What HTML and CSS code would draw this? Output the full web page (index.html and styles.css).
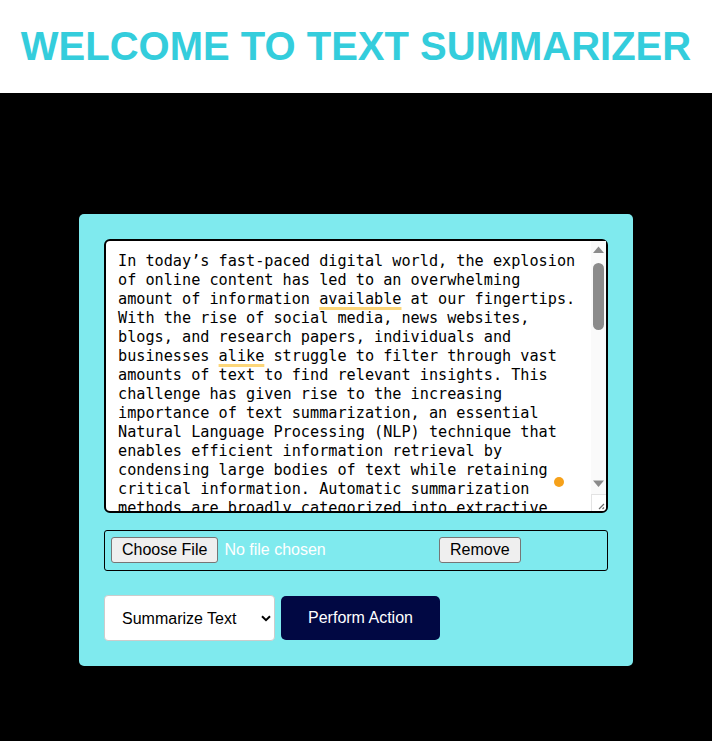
FILE: index.html
```html
<!DOCTYPE html>
<html lang="en">
<head>
<meta charset="utf-8">
<title>Text Summarizer</title>
<link rel="stylesheet" href="styles.css">
</head>
<body>
<header class="header">
  <h1 class="title">WELCOME TO TEXT SUMMARIZER</h1>
</header>
<main class="main">
  <section class="card">
    <div class="editor-wrap">
      <div class="editor" contenteditable="true" spellcheck="false">In today’s fast-paced digital world, the explosion of online content has led to an overwhelming amount of information <span class="mark">available</span> at our fingertips. With the rise of social media, news websites, blogs, and research papers, individuals and businesses <span class="mark">alike</span> struggle to filter through vast amounts of text to find relevant insights. This challenge has given rise to the increasing importance of text summarization, an essential Natural Language Processing (NLP) technique that enables efficient information retrieval by condensing large bodies of text while retaining critical information. Automatic summarization methods are broadly categorized into extractive and abstractive approaches. Extractive summarization identifies the most important sentences in a document and stitches them together to form a shorter version of the original text, while abstractive summarization generates entirely new sentences that capture the core meaning, much like a human would when writing a summary. Extractive methods often rely on statistical features such as word frequency, sentence position and similarity scores, whereas abstractive methods use deep learning models such as sequence-to-sequence networks and transformers. Recent advances in large pre-trained language models have greatly improved the fluency and coherence of generated summaries, making text summarization a practical tool for news aggregation, legal document review, medical record analysis and academic research.</div>
      <div class="scrollbar" aria-hidden="true">
        <svg class="arrow" width="15" height="17" viewBox="0 0 15 17"><path d="M2 12 L7.5 5.5 L13 12 Z" fill="#8b8b8b"/></svg>
        <div class="track"><div class="thumb"></div></div>
        <svg class="arrow" width="15" height="17" viewBox="0 0 15 17"><path d="M2 3.5 L7.5 10 L13 3.5 Z" fill="#8b8b8b"/></svg>
      </div>
      <div class="resizer" aria-hidden="true">
        <svg width="15" height="15" viewBox="0 0 15 15"><path d="M13 8 L8 13 M13 11.5 L11.5 13" stroke="#6b6b6b" stroke-width="1.2" fill="none"/></svg>
      </div>
      <span class="dot"></span>
    </div>
    <div class="file-row">
      <div class="file-group">
        <button class="btn-gray" type="button">Choose File</button>
        <span class="file-name">No file chosen</span>
      </div>
      <button class="btn-gray" type="button">Remove</button>
    </div>
    <div class="action-row">
      <div class="select-wrap">
        <select class="select">
          <option>Summarize Text</option>
          <option>Paraphrase Text</option>
        </select>
        <svg class="chevron" width="10" height="7" viewBox="0 0 10 7"><path d="M1 1.2 L5 5.2 L9 1.2" fill="none" stroke="#000" stroke-width="2"/></svg>
      </div>
      <button class="btn-primary" type="button">Perform Action</button>
    </div>
  </section>
</main>
</body>
</html>
```
FILE: styles.css
```css
html, body {
  margin: 0;
  padding: 0;
}
body {
  background: #000;
  min-height: 100vh;
  font-family: "Liberation Sans", Arial, sans-serif;
}
.header {
  background: #fff;
  padding: 23px 0 24px;
}
.title {
  margin: 0;
  text-align: center;
  font-size: 40px;
  line-height: 46px;
  font-weight: bold;
  color: #34cddc;
}
.main {
  padding-top: 121px;
  display: flex;
  justify-content: center;
}
.card {
  width: 554px;
  box-sizing: border-box;
  padding: 25px;
  background: #7feaee;
  border-radius: 5px;
}
.editor-wrap {
  position: relative;
}
.editor {
  box-sizing: border-box;
  width: 100%;
  height: 274px;
  border: 2px solid #000;
  border-radius: 6px;
  background: #fff;
  padding: 11px 27px 12px 12px;
  font-family: "DejaVu Sans Mono", monospace;
  font-size: 15.2px;
  line-height: 19px;
  color: #000;
  white-space: pre-wrap;
  overflow: hidden;
  outline: none;
}
.mark {
  text-decoration: underline;
  text-decoration-color: #fcd679;
  text-decoration-thickness: 2.5px;
  text-underline-offset: 3px;
}
.scrollbar {
  position: absolute;
  top: 2px;
  right: 2px;
  width: 15px;
  height: 253px;
  background: #fafafa;
  display: flex;
  flex-direction: column;
}
.arrow {
  display: block;
  flex: none;
}
.track {
  flex: 1;
  padding: 5px 2px 0;
}
.thumb {
  height: 67px;
  background: #8b8b8b;
  border-radius: 6px;
}
.resizer {
  position: absolute;
  right: 2px;
  bottom: 2px;
  width: 15px;
  height: 17px;
  box-sizing: border-box;
  border-top: 1px solid #e3e3e3;
  border-left: 1px solid #e3e3e3;
  border-bottom-right-radius: 4px;
  background: #fff;
  overflow: hidden;
  display: flex;
  align-items: flex-end;
}
.resizer svg {
  display: block;
  margin: 0 0 0 -1px;
}
.dot {
  position: absolute;
  left: 450px;
  top: 238px;
  width: 10px;
  height: 10px;
  border-radius: 50%;
  background: #f6a11a;
}
.file-row {
  margin-top: 17px;
  display: flex;
  align-items: center;
  border: 1px solid #000;
  border-radius: 3px;
  padding: 6px 6px 7px;
}
.file-group {
  width: 328px;
  display: flex;
  align-items: center;
  gap: 6px;
}
.btn-gray {
  font-family: "Liberation Sans", Arial, sans-serif;
  font-size: 16px;
  line-height: 18px;
  height: 26px;
  padding: 0 10px;
  background: #efefef;
  color: #000;
  border: 1px solid #767676;
  border-radius: 3px;
  box-sizing: border-box;
}
.file-name {
  color: #fff;
  font-size: 16px;
}
.action-row {
  margin-top: 24px;
  display: flex;
  align-items: center;
  gap: 6px;
}
.select-wrap {
  position: relative;
}
.select {
  appearance: none;
  -webkit-appearance: none;
  width: 171px;
  height: 46px;
  box-sizing: border-box;
  background: #fff;
  border: 1px solid #cccccc;
  border-radius: 4px;
  padding: 0 0 0 17px;
  font-family: "Liberation Sans", Arial, sans-serif;
  font-size: 16px;
  color: #000;
  display: block;
}
.chevron {
  position: absolute;
  left: 157px;
  top: 20px;
  pointer-events: none;
}
.btn-primary {
  width: 159px;
  height: 44px;
  background: #010843;
  color: #fff;
  border: none;
  border-radius: 5px;
  font-family: "Liberation Sans", Arial, sans-serif;
  font-size: 16px;
  padding: 0;
}
```
